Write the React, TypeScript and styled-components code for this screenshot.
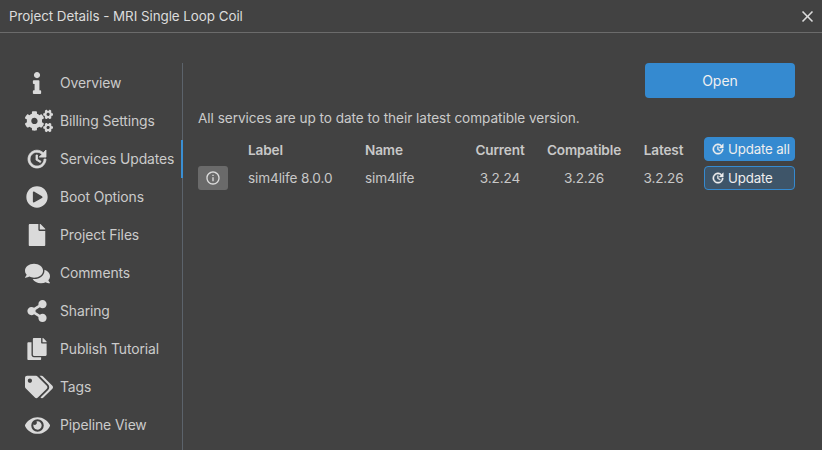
import React from "react";
import styled, { createGlobalStyle } from "styled-components";
import { FaInfo, FaCogs, FaPlayCircle, FaFile, FaComments, FaShareAlt, FaCopy, FaTags, FaEye } from "react-icons/fa";
import { MdClose, MdInfoOutline } from "react-icons/md";

const Global = createGlobalStyle`
  html, body { margin: 0; padding: 0; background: #424242; }
  body { font-family: Inter, "Noto Sans", sans-serif; }
`;

const Page = styled.div`
  width: 822px;
  height: 450px;
  overflow: hidden;
  display: flex;
  flex-direction: column;
  background: #424242;
  color: #cfcfcf;
`;

const TitleBar = styled.header`
  height: 32px;
  flex: none;
  display: flex;
  align-items: center;
  justify-content: space-between;
  padding: 0 5px 0 9px;
  border-bottom: 1px solid #6b6b6b;
`;

const Title = styled.h1`
  margin: 0;
  font-size: 13.4px;
  font-weight: 400;
  letter-spacing: -0.05px;
  color: #dcdcdc;
`;

const Close = styled.button`
  border: 0;
  padding: 0;
  background: none;
  display: flex;
  color: #dcdcdc;
  font-size: 19px;
`;

const Body = styled.div`
  flex: 1;
  display: flex;
  padding-top: 30px;
  min-height: 0;
`;

const Side = styled.nav`
  width: 183px;
  flex: none;
  box-sizing: border-box;
  border-right: 1px solid #5c636b;
  padding-top: 1px;
`;

const NavItem = styled.div<{ $active?: boolean }>`
  height: 38px;
  display: flex;
  align-items: center;
  margin-right: -1px;
  border-right: 2px solid ${(p) => (p.$active ? "#3a8fd3" : "transparent")};
  font-size: 13.9px;
  letter-spacing: -0.1px;
  color: #cbcbcb;
`;

const IconSlot = styled.span<{ $wide?: boolean }>`
  width: 28px;
  margin-left: 23px;
  margin-right: 9px;
  padding-left: ${(p) => (p.$wide ? "4px" : "0")};
  box-sizing: border-box;
  display: flex;
  justify-content: center;
  color: #dadada;

  svg {
    flex: none;
  }
`;

const Main = styled.main`
  flex: 1;
  display: flex;
  flex-direction: column;
  padding: 0 27px 0 15px;
`;

const OpenRow = styled.div`
  display: flex;
  justify-content: flex-end;
`;

const OpenButton = styled.button`
  width: 150px;
  height: 35px;
  border: 0;
  border-radius: 4px;
  background: #358ad0;
  color: #f0f0f0;
  font: 400 14px Inter, sans-serif;
`;

const Message = styled.p`
  margin: 12px 0 0;
  height: 17px;
  line-height: 17px;
  font-size: 13.6px;
  letter-spacing: -0.04px;
  color: #cbcbcb;
`;

const Table = styled.div`
  margin-top: 10px;
  display: grid;
  grid-template-columns: 50px 117px 90px 90px 78px 81px 91px;
  grid-auto-rows: 24px;
  row-gap: 5px;
  align-items: center;
  font-size: 13.6px;
  letter-spacing: -0.13px;
`;

const Head = styled.div<{ $center?: boolean }>`
  font-weight: 600;
  padding-top: 1px;
  text-align: ${(p) => (p.$center ? "center" : "left")};
  color: #c8c8c8;
`;

const Cell = styled.div<{ $center?: boolean }>`
  text-align: ${(p) => (p.$center ? "center" : "left")};
  color: #c8c8c8;
`;

const InfoButton = styled.button`
  width: 30px;
  height: 24px;
  padding: 0;
  border: 0;
  border-radius: 3px;
  background: #6a6a6a;
  color: #dcdcdc;
  display: flex;
  align-items: center;
  justify-content: center;
  font-size: 16px;
`;

const UpdateButton = styled.button<{ $filled?: boolean }>`
  width: 91px;
  height: 24px;
  box-sizing: border-box;
  padding: 0 0 0 6px;
  border-radius: 4px;
  border: 1px solid #358ad0;
  background: ${(p) => (p.$filled ? "#358ad0" : "#3e5569")};
  color: #eeeeee;
  display: flex;
  align-items: center;
  gap: 3px;
  font: 400 13.3px Inter, sans-serif;
  letter-spacing: -0.15px;
`;

const UpdateIcon = ({ size }: { size: number }) => (
  <svg width={size} height={size} viewBox="0 0 24 24" fill="currentColor" stroke="currentColor" strokeWidth="0.8" aria-hidden="true">
    <path d="M21 10.12h-6.78l2.74-2.82c-2.73-2.7-7.15-2.8-9.88-.1-2.73 2.71-2.73 7.08 0 9.79s7.15 2.71 9.88 0C18.32 15.65 19 14.08 19 12.1h2c0 1.98-.88 4.55-2.64 6.29-3.51 3.48-9.21 3.48-12.72 0-3.5-3.47-3.53-9.11-.02-12.58s9.14-3.47 12.65 0L21 3v7.12zM12.5 8v4.25l3.5 2.08-.72 1.21L11 13V8h1.5z" />
  </svg>
);

const items = [
  { label: "Overview", icon: <FaInfo size={22} /> },
  { label: "Billing Settings", icon: <FaCogs size={28} />, wide: true },
  { label: "Services Updates", icon: <UpdateIcon size={24} />, active: true },
  { label: "Boot Options", icon: <FaPlayCircle size={22} /> },
  { label: "Project Files", icon: <FaFile size={22} /> },
  { label: "Comments", icon: <FaComments size={25} /> },
  { label: "Sharing", icon: <FaShareAlt size={22} /> },
  { label: "Publish Tutorial", icon: <FaCopy size={22} /> },
  { label: "Tags", icon: <FaTags size={28} />, wide: true },
  { label: "Pipeline View", icon: <FaEye size={25} /> },
];

export default function App() {
  return (
    <Page>
      <Global />
      <TitleBar>
        <Title>Project Details - MRI Single Loop Coil</Title>
        <Close aria-label="Close"><MdClose /></Close>
      </TitleBar>
      <Body>
        <Side>
          {items.map((i) => (
            <NavItem key={i.label} $active={i.active}>
              <IconSlot $wide={i.wide}>{i.icon}</IconSlot>
              {i.label}
            </NavItem>
          ))}
        </Side>
        <Main>
          <OpenRow><OpenButton>Open</OpenButton></OpenRow>
          <Message>All services are up to date to their latest compatible version.</Message>
          <Table>
            <span />
            <Head>Label</Head>
            <Head>Name</Head>
            <Head $center>Current</Head>
            <Head $center>Compatible</Head>
            <Head $center>Latest</Head>
            <UpdateButton $filled><UpdateIcon size={14} />Update all</UpdateButton>
            <InfoButton aria-label="Info"><MdInfoOutline /></InfoButton>
            <Cell>sim4life 8.0.0</Cell>
            <Cell>sim4life</Cell>
            <Cell $center>3.2.24</Cell>
            <Cell $center>3.2.26</Cell>
            <Cell $center>3.2.26</Cell>
            <UpdateButton><UpdateIcon size={14} />Update</UpdateButton>
          </Table>
        </Main>
      </Body>
    </Page>
  );
}
